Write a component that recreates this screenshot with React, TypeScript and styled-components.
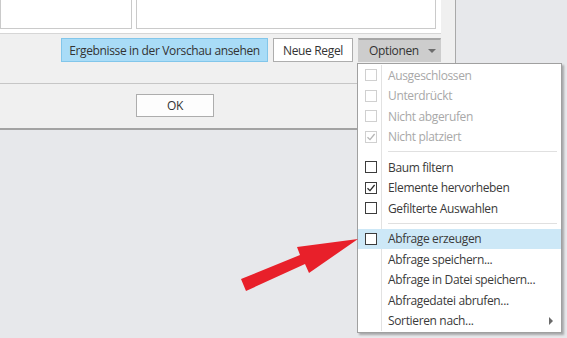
import styled, { createGlobalStyle } from "styled-components";

const GlobalStyle = createGlobalStyle`
  html, body {
    margin: 0;
    padding: 0;
    background: #e7e8eb;
  }
  body {
    font-family: "Open Sans", "Noto Sans", "Liberation Sans", sans-serif;
    font-size: 12px;
    letter-spacing: -0.35px;
    color: #333;
  }
`;

const Page = styled.div`
  position: relative;
  width: 567px;
  height: 338px;
  overflow: hidden;
  background: #e7e8eb;
`;

const Dialog = styled.div`
  width: 455px;
  height: 128px;
  background: #f0f0f0;
  border-right: 1px solid #a9a9a9;
  border-bottom: 2px solid #a3a3a3;
  display: flex;
  flex-direction: column;
`;

const TopArea = styled.div`
  width: 441px;
  height: 34px;
  box-sizing: border-box;
  background: #fff;
  border-bottom: 1px solid #d6d6d6;
  display: flex;
  gap: 4px;
  padding: 0 5px 4px 0;
`;

const Pane = styled.div<{ $w: number }>`
  width: ${(p) => p.$w}px;
  box-sizing: border-box;
  border: 1px solid #cacaca;
  border-top: none;
  background: #fff;
`;

const ButtonRow = styled.div`
  display: flex;
  gap: 5px;
  padding: 4px 0 0 61px;
  height: 50px;
  box-sizing: border-box;
  border-bottom: 1px solid #c6c6c6;
`;

const Button = styled.div<{ $w: number; $variant?: "primary" | "menu" }>`
  width: ${(p) => p.$w}px;
  height: 24px;
  box-sizing: border-box;
  display: flex;
  align-items: center;
  justify-content: ${(p) => (p.$variant === "menu" ? "flex-start" : "center")};
  padding: ${(p) => (p.$variant === "menu" ? "0 0 0 10px" : "0")};
  background: ${(p) =>
    p.$variant === "primary" ? "#a9dcf7" : p.$variant === "menu" ? "#cdcdcd" : "#fff"};
  border: 1px solid
    ${(p) => (p.$variant === "primary" ? "#82c6ea" : p.$variant === "menu" ? "#cdcdcd" : "#adadad")};
  border-top: ${(p) => (p.$variant === "menu" ? "2px solid #a6a6a6" : undefined)};
  color: #333;
  white-space: nowrap;
`;

const DropCaret = styled.span`
  margin-left: auto;
  margin-right: 4px;
  width: 0;
  height: 0;
  border-left: 4px solid transparent;
  border-right: 4px solid transparent;
  border-top: 4px solid #6d6d6d;
`;

const OkRow = styled.div`
  flex: 1;
  display: flex;
  align-items: flex-start;
  padding: 10px 0 0 136px;
`;

const OkButton = styled.div`
  width: 78px;
  height: 23px;
  box-sizing: border-box;
  border: 1px solid #adadad;
  background: #fdfdfd;
  display: flex;
  align-items: center;
  justify-content: center;
  color: #333;
`;

const Menu = styled.div`
  position: absolute;
  left: 357px;
  top: 63px;
  width: 205px;
  box-sizing: border-box;
  background: #fff;
  border: 1px solid #a0a0a0;
  box-shadow: 2px 2px 2px rgba(0, 0, 0, 0.28);
  padding: 1px 0;
  display: flex;
  flex-direction: column;
`;

const Item = styled.div<{ $active?: boolean }>`
  height: 20.5px;
  display: flex;
  align-items: stretch;
  background: ${(p) => (p.$active ? "#cde8f7" : "transparent")};
`;

const IconCell = styled.div<{ $active?: boolean }>`
  width: 24px;
  flex: none;
  display: flex;
  align-items: center;
  justify-content: center;
  border-right: 1px solid ${(p) => (p.$active ? "transparent" : "#e2e2e2")};
  padding-left: 2px;
  box-sizing: border-box;
`;

const Label = styled.div<{ $disabled?: boolean }>`
  flex: 1;
  display: flex;
  align-items: center;
  padding-left: 6px;
  padding-right: 8px;
  color: ${(p) => (p.$disabled ? "#a8a8a8" : "#3a3a3a")};
  white-space: nowrap;
`;

const SubCaret = styled.span`
  margin-left: auto;
  width: 0;
  height: 0;
  border-top: 4px solid transparent;
  border-bottom: 4px solid transparent;
  border-left: 4px solid #6a6a6a;
`;

const Separator = styled.div`
  height: 10px;
  display: flex;
  align-items: stretch;
`;

const SeparatorLine = styled.div`
  flex: 1;
  margin-right: 4px;
  background: linear-gradient(#e0e0e0, #e0e0e0) no-repeat 6px 4px / calc(100% - 6px) 1px;
`;

const Box = styled.div<{ $disabled?: boolean }>`
  width: 12px;
  height: 12px;
  box-sizing: border-box;
  border: 1px solid ${(p) => (p.$disabled ? "#d0d0d0" : "#3c3c3c")};
  background: #fff;
  display: flex;
  align-items: center;
  justify-content: center;
`;

const ArrowSvg = styled.svg`
  position: absolute;
  left: 0;
  top: 0;
  pointer-events: none;
`;

type Entry =
  | { kind: "sep" }
  | { kind: "item"; label: string; box?: boolean; checked?: boolean; disabled?: boolean; active?: boolean; sub?: boolean };

const entries: Entry[] = [
  { kind: "item", label: "Ausgeschlossen", box: true, disabled: true },
  { kind: "item", label: "Unterdrückt", box: true, disabled: true },
  { kind: "item", label: "Nicht abgerufen", box: true, disabled: true },
  { kind: "item", label: "Nicht platziert", box: true, checked: true, disabled: true },
  { kind: "sep" },
  { kind: "item", label: "Baum filtern", box: true },
  { kind: "item", label: "Elemente hervorheben", box: true, checked: true },
  { kind: "item", label: "Gefilterte Auswahlen", box: true },
  { kind: "sep" },
  { kind: "item", label: "Abfrage erzeugen", box: true, active: true },
  { kind: "item", label: "Abfrage speichern..." },
  { kind: "item", label: "Abfrage in Datei speichern..." },
  { kind: "item", label: "Abfragedatei abrufen..." },
  { kind: "item", label: "Sortieren nach...", sub: true },
];

const Check = ({ color }: { color: string }) => (
  <svg width="10" height="10" viewBox="0 0 10 10">
    <path d="M1.5 5.2 L4 7.6 L8.6 2" fill="none" stroke={color} strokeWidth="1.3" />
  </svg>
);

export default function App() {
  return (
    <Page>
      <GlobalStyle />
      <Dialog>
        <TopArea>
          <Pane $w={132} />
          <Pane $w={300} />
        </TopArea>
        <ButtonRow>
          <Button $w={207} $variant="primary">Ergebnisse in der Vorschau ansehen</Button>
          <Button $w={80}>Neue Regel</Button>
          <Button $w={83} $variant="menu">
            Optionen
            <DropCaret />
          </Button>
        </ButtonRow>
        <OkRow>
          <OkButton>OK</OkButton>
        </OkRow>
      </Dialog>

      <Menu>
        {entries.map((e, i) =>
          e.kind === "sep" ? (
            <Separator key={i}>
              <IconCell />
              <SeparatorLine />
            </Separator>
          ) : (
            <Item key={i} $active={e.active}>
              <IconCell $active={e.active}>
                {e.box && (
                  <Box $disabled={e.disabled}>
                    {e.checked && <Check color={e.disabled ? "#b5b5b5" : "#2a2a2a"} />}
                  </Box>
                )}
              </IconCell>
              <Label $disabled={e.disabled}>
                {e.label}
                {e.sub && <SubCaret />}
              </Label>
            </Item>
          )
        )}
      </Menu>

      <ArrowSvg width="567" height="338" viewBox="0 0 567 338">
        <polygon
          points="241,279 300,255 297,247 358,239 309,273 305,264 246,291"
          fill="#e8202a"
        />
      </ArrowSvg>
    </Page>
  );
}
